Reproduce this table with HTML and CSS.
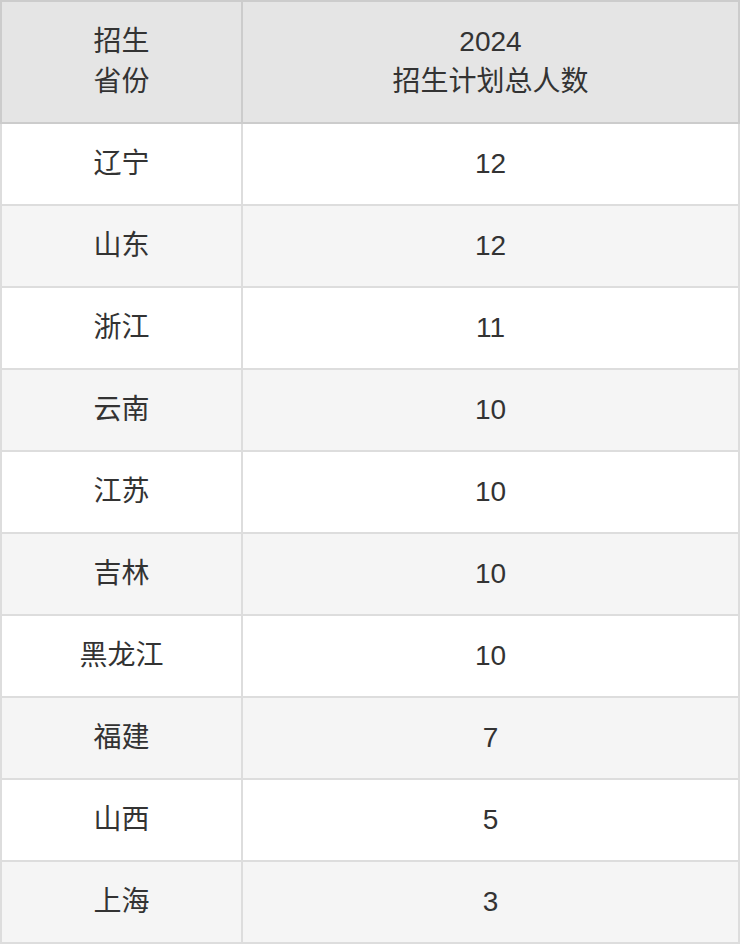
FILE: index.html
```html
<!DOCTYPE html>
<html lang="zh-CN">
<head>
<meta charset="utf-8">
<title>招生计划</title>
<link rel="stylesheet" href="styles.css">
</head>
<body>
<table class="plan">
  <thead>
    <tr>
      <th class="col-prov">招生<br>省份</th>
      <th class="col-num">2024<br>招生计划总人数</th>
    </tr>
  </thead>
  <tbody>
    <tr><td>辽宁</td><td>12</td></tr>
    <tr><td>山东</td><td>12</td></tr>
    <tr><td>浙江</td><td>11</td></tr>
    <tr><td>云南</td><td>10</td></tr>
    <tr><td>江苏</td><td>10</td></tr>
    <tr><td>吉林</td><td>10</td></tr>
    <tr><td>黑龙江</td><td>10</td></tr>
    <tr><td>福建</td><td>7</td></tr>
    <tr><td>山西</td><td>5</td></tr>
    <tr><td>上海</td><td>3</td></tr>
  </tbody>
</table>
</body>
</html>
```
FILE: styles.css
```css
html, body {
  margin: 0;
  padding: 0;
  background: #ffffff;
}

.plan {
  width: 740px;
  border-collapse: collapse;
  table-layout: fixed;
  font-family: "Liberation Sans", "Noto Sans CJK SC", sans-serif;
  font-size: 28px;
  color: #333333;
}

.plan th,
.plan td {
  padding: 0;
  text-align: center;
  vertical-align: middle;
  font-weight: normal;
}

.plan th {
  height: 120px;
  line-height: 40px;
  background: #e5e5e5;
  border: 2px solid #cccccc;
}

.plan .col-prov {
  width: 239px;
}

.plan td {
  height: 80px;
  line-height: 40px;
  border: 2px solid #dddddd;
}

.plan tbody tr:nth-child(even) td {
  background: #f5f5f5;
}
```
